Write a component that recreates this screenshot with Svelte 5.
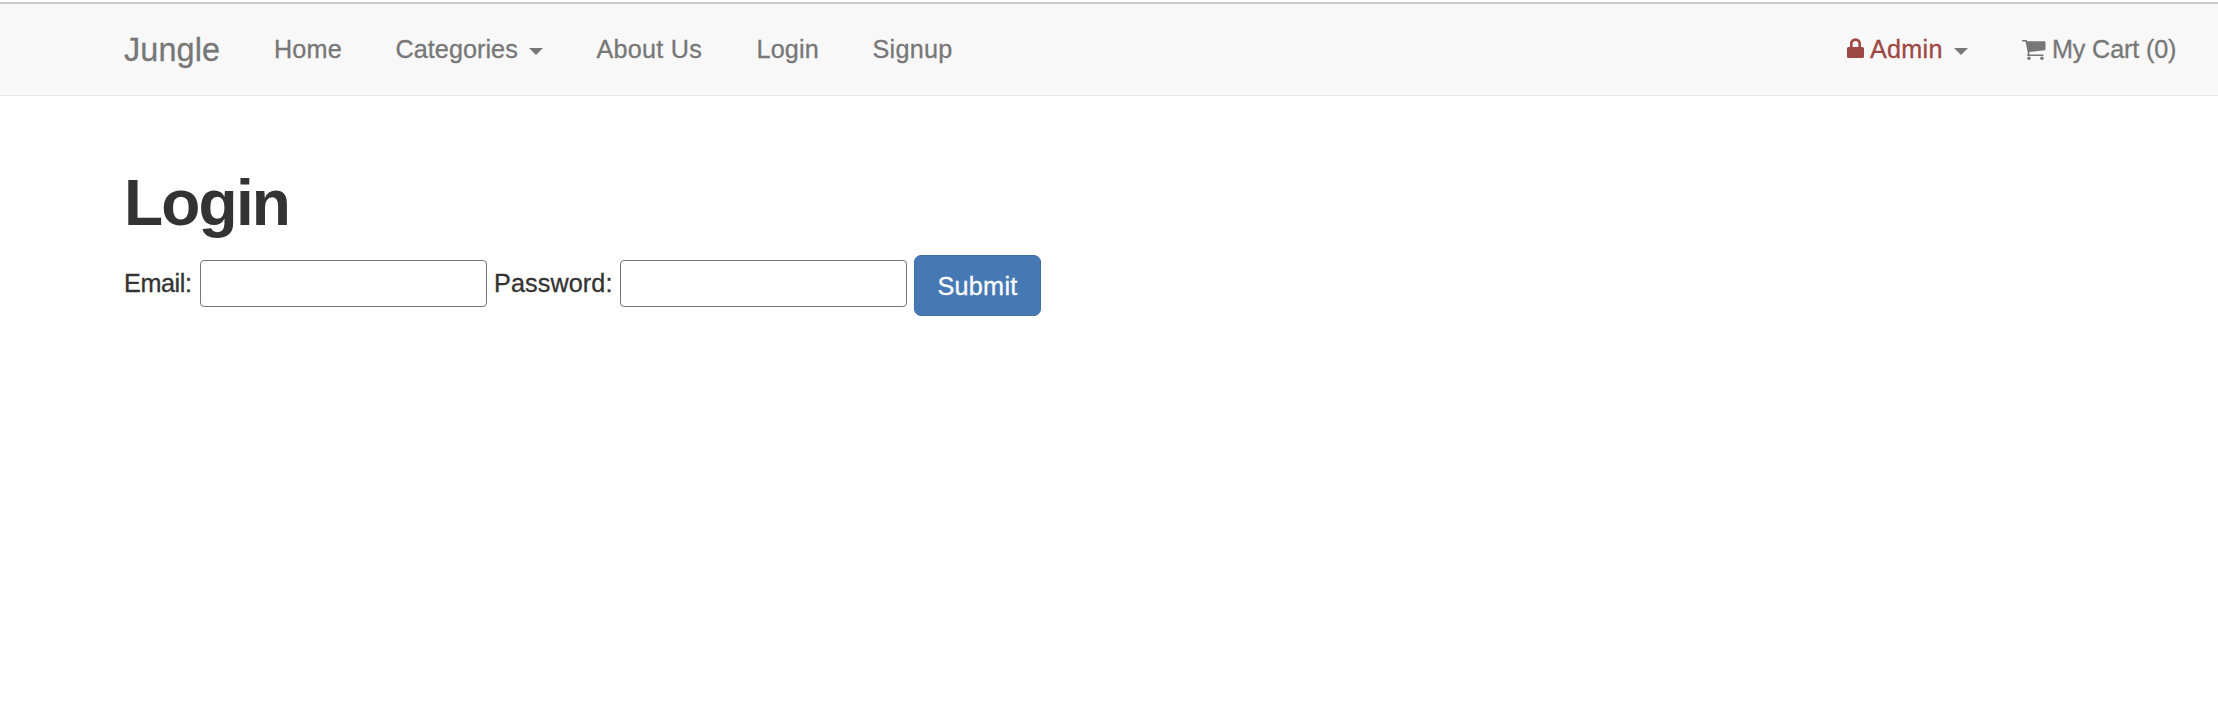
<script>
  const links = [
    { label: 'Home', width: 121.5, spacing: 0.15 },
    { label: 'Categories', width: 201, spacing: 0.05, caret: true },
    { label: 'About Us', width: 160, spacing: 0.25 },
    { label: 'Login', width: 116, spacing: 0.15 },
    { label: 'Signup', width: 140, spacing: 0.25 }
  ];
  let email = $state('');
  let password = $state('');
</script>

<nav>
  <a class="brand" href="#home">Jungle</a>
  <div class="links">
    {#each links as link}
      <a href="#{link.label}" style:width="{link.width}px" style:letter-spacing="{link.spacing}px">{link.label}{#if link.caret}<i class="caret"></i>{/if}</a>
    {/each}
  </div>
  <div class="right">
    <a class="admin" href="#admin">
      <svg class="lock" viewBox="0 0 17 20" width="17" height="20"><path fill="currentColor" fill-rule="evenodd" d="M3 9V5.7a5.5 5.5 0 0 1 11 0V9h1.4A1.6 1.6 0 0 1 17 10.600V18.400A1.600 1.600 0 0 1 15.400 20H1.600A1.600 1.600 0 0 1 0 18.400V10.600A1.600 1.600 0 0 1 1.600 9ZM5.600 9H11.400V5.800a2.900 2.900 0 0 0-5.800 0Z" /></svg>
      <span>Admin</span><i class="caret"></i>
    </a>
    <a class="cart" href="#cart">
      <svg viewBox="0 0 24 20" width="24" height="20"><path fill="currentColor" d="M.7 0H4.300Q5.100 0 5.300 1.300H22.600Q23.500 1.300 23.500 2.200V9.200Q23.500 10.100 22.600 10.200L7.300 12L7.500 13.200L7 14.500H21Q21.700 14.600 21.700 15.300T21 16.100H5.800Q5 16 5.100 15.200L5.900 13.100L3.500 1.600H.7A.8.8 0 0 1 .7 0Z" /><circle cx="7" cy="18.200" r="1.700" fill="currentColor" /><circle cx="19.900" cy="18.200" r="1.700" fill="currentColor" /></svg>
      <span>My Cart (0)</span>
    </a>
  </div>
</nav>

<main>
  <h1>Login</h1>
  <form onsubmit={(e) => e.preventDefault()}>
    <label class="email" for="email">Email:</label>
    <input id="email" type="text" bind:value={email} />
    <label class="password" for="password">Password:</label>
    <input id="password" type="password" bind:value={password} />
    <button type="submit">Submit</button>
  </form>
</main>

<style>
  :global(body) {
    background: #fff;
    color: #333;
    font: 25.2px/36px "Liberation Sans", Arial, sans-serif;
    -webkit-text-stroke: 0.3px currentColor;
  }
  :global(#app) { display: flow-root; }
  * { box-sizing: border-box; }
  nav {
    display: flex;
    height: 94px;
    margin-top: 2px;
    padding: 0 43px 0 124px;
    align-items: flex-start;
    background: #f8f8f8;
    border-top: 2px solid #c9c9c9;
    border-bottom: 1px solid #e7e7e7;
  }
  a { color: #777; text-decoration: none; white-space: nowrap; }
  .brand { width: 150px; padding-top: 28px; font-size: 32.4px; letter-spacing: 0.1px; }
  .links { display: flex; padding-top: 27px; }
  .caret {
    display: inline-block;
    margin-left: 11px;
    vertical-align: 3px;
    border: 7px solid transparent;
    border-top-color: #777;
    border-bottom: 0;
  }
  .right { display: flex; margin-left: auto; padding-top: 27px; }
  .right a { display: flex; align-items: flex-start; }
  .right svg { flex: none; margin-top: 7px; }
  .right .cart svg { margin: 9px 1px 0 -1px; }
  .admin { width: 176px; color: #9d4744; }
  .admin span { margin-left: 6px; letter-spacing: 0.25px; }
  .admin .caret { margin: 17px 0 0 11px; }
  .cart { width: 152px; }
  .cart span { margin-left: 5px; letter-spacing: -0.15px; }
  main { padding: 72px 0 0 124px; }
  h1 {
    margin: 0;
    height: 87px;
    font-size: 64px;
    line-height: 71px;
    font-weight: 700;
    letter-spacing: -1.8px;
    -webkit-text-stroke: 0;
  }
  form { display: flex; align-items: flex-start; }
  label { padding-top: 10px; white-space: nowrap; }
  .email { width: 76px; letter-spacing: -0.4px; }
  .password { width: 126px; margin-left: 7px; letter-spacing: 0.1px; }
  input {
    width: 287px;
    height: 47px;
    margin: 5px 0 0;
    padding: 2px 4px;
    background: #fff;
    border: 1px solid #767676;
    border-radius: 4px;
    font: inherit;
    outline: none;
  }
  button {
    width: 127px;
    height: 61px;
    margin: 0 0 0 7px;
    padding: 0;
    color: #fff;
    background: #4679b3;
    border: 1px solid #406fa8;
    border-radius: 7px;
    font: inherit;
    letter-spacing: 0.3px;
  }
</style>
